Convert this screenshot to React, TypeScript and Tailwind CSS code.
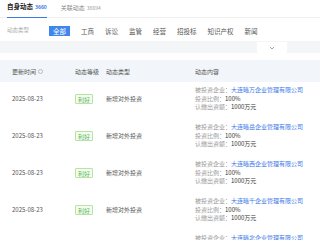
const filters = ['全部', '工商', '诉讼', '监管', '经营', '招投标', '知识产权', '新闻']

const rows = [
  { date: '2025-08-23', level: '利好', type: '新增对外投资', company: '大连曦万企业管理有限公司', ratio: '100%', amount: '1000万元' },
  { date: '2025-08-23', level: '利好', type: '新增对外投资', company: '大连曦岳企业管理有限公司', ratio: '100%', amount: '1000万元' },
  { date: '2025-08-23', level: '利好', type: '新增对外投资', company: '大连曦西企业管理有限公司', ratio: '100%', amount: '1000万元' },
  { date: '2025-08-23', level: '利好', type: '新增对外投资', company: '大连曦千企业管理有限公司', ratio: '100%', amount: '1000万元' },
  { date: '2025-08-23', level: '利好', type: '新增对外投资', company: '大连曦北企业管理有限公司', ratio: '100%', amount: '1000万元' },
]

function Chevron() {
  return (
    <svg width="6" height="4" viewBox="0 0 6 4" fill="none" stroke="#888" strokeWidth="0.8">
      <path d="M1 1l2 2 2-2" />
    </svg>
  )
}

export default function App() {
  return (
    <div className="w-[320px] h-[240px] bg-white overflow-hidden font-['Noto_Sans_CJK_SC',sans-serif] text-[#333]">
      {/* tabs */}
      <div className="h-[18px] border-b border-[#eeeeee] flex px-[7px] gap-[14px]">
        <div className="h-[18px] flex items-center pb-[3px] border-b-[1.5px] border-[#3a78e6] -mb-px">
          <span className="text-[6.5px] font-bold text-[#222]">自身动态</span>
          <span className="text-[5px] font-bold text-[#3a78e6] ml-[2px]">3660</span>
        </div>
        <div className="h-[18px] flex items-center pb-[3px]">
          <span className="text-[6px] text-[#888]">关联动态</span>
          <span className="text-[5px] text-[#999] ml-[2px]">38694</span>
        </div>
      </div>

      {/* filter row */}
      <div className="h-[23px] flex items-center pt-[2px] px-[7px]">
        <span className="text-[5.5px] text-[#aaa] w-[42px]">动态类型</span>
        <div className="flex items-center gap-[11px]">
          {filters.map((f, i) => (
            <span
              key={f}
              className={
                i === 0
                  ? 'text-[6.5px] leading-[10px] h-[10px] px-[4px] bg-[#3f86ec] text-white'
                  : 'text-[6.5px] leading-[10px] text-[#555]'
              }
            >
              {f}
            </span>
          ))}
        </div>
      </div>

      {/* gray band */}
      <div className="h-[12px] bg-[#f4f5f7] flex justify-end pr-[33px]">
        <div className="w-[30px] h-[11px] mt-[1px] bg-white rounded-b-[2px] flex items-center justify-center">
          <Chevron />
        </div>
      </div>

      <div className="h-[7px]" />

      {/* table header */}
      <div className="h-[22px] bg-[#f2f5fa] flex items-center pl-[12px] text-[6px] text-[#555]">
        <div className="w-[63px] flex items-center gap-[2px]">
          <span>更新时间</span>
          <span className="w-[5px] h-[5px] rounded-full border-[0.6px] border-[#bbb]" />
        </div>
        <div className="w-[31px]">动态等级</div>
        <div className="w-[89px]">动态类型</div>
        <div>动态内容</div>
      </div>

      {/* rows */}
      {rows.map((r, i) => (
        <div key={i} className="h-[37px] flex pl-[12px] pt-[4px] text-[6px]">
          <div className="h-[25.5px] w-[63px] flex items-center text-[#555]">{r.date}</div>
          <div className="h-[25.5px] w-[31px] flex items-center">
            <span className="px-[2px] h-[10px] leading-[9px] border-[0.6px] border-[#b7e4a3] bg-[#f4fbef] text-[#5cb85c] rounded-[1px]">
              {r.level}
            </span>
          </div>
          <div className="h-[25.5px] w-[89px] flex items-center text-[#555]">{r.type}</div>
          <div className="flex flex-col leading-[8.5px]">
            <div>
              <span className="text-[#999]">被投资企业：</span>
              <span className="text-[#3a78e6]">{r.company}</span>
            </div>
            <div>
              <span className="text-[#999]">投资比例：</span>
              <span className="text-[#333]">{r.ratio}</span>
            </div>
            <div>
              <span className="text-[#999]">认缴出资额：</span>
              <span className="text-[#333]">{r.amount}</span>
            </div>
          </div>
        </div>
      ))}
    </div>
  )
}
